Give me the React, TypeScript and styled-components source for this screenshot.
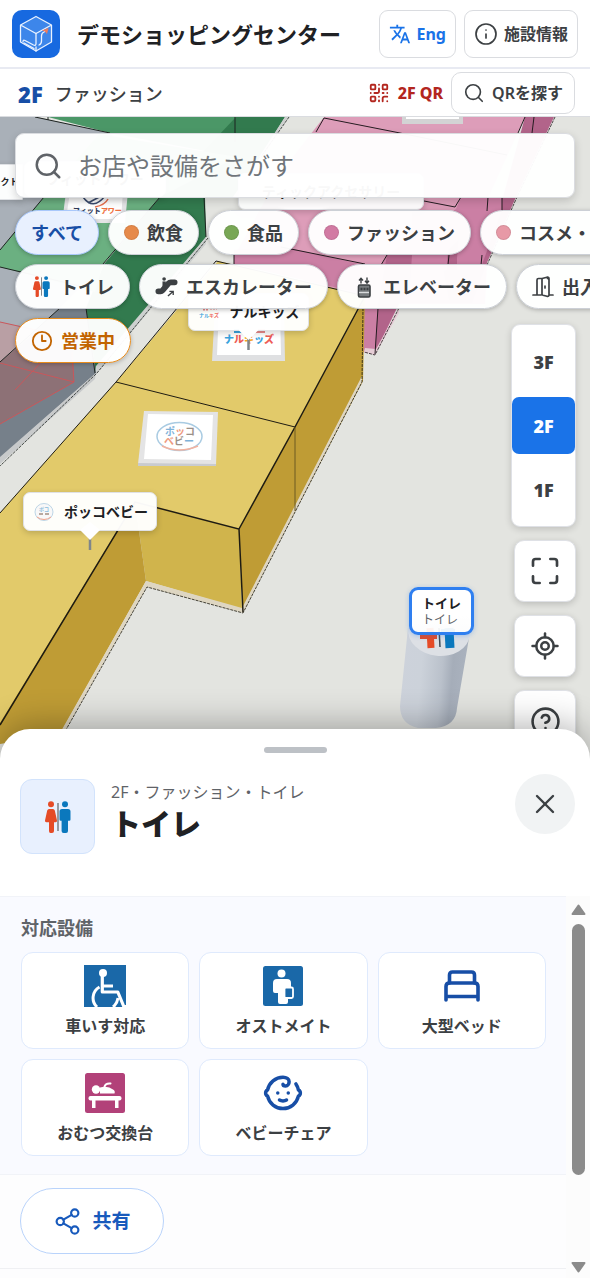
import React from "react";
import styled, { createGlobalStyle, css } from "styled-components";
import {
  Baby,
  CircleQuestionMark,
  Clock3,
  Info,
  LocateFixed,
  Maximize,
  QrCode,
  Search,
  Share2,
  X,
} from "lucide-react";
import { MdTranslate } from "react-icons/md";

const GlobalStyle = createGlobalStyle`
  *, *::before, *::after { box-sizing: border-box; }
  body {
    margin: 0;
    background: #fff;
    color: #3c4043;
    font-family: "Noto Sans", "Noto Sans CJK JP", sans-serif;
    overflow: hidden;
  }
  button, input { font: inherit; color: inherit; }
  button { cursor: pointer; }
  h1, h2, h3, p, ul { margin: 0; padding: 0; }
  svg { display: block; flex: none; }
`;

const Page = styled.div`
  display: flex;
  flex-direction: column;
  min-height: 100vh;
`;

/* ---------- top bars ---------- */

const TopBar = styled.header`
  display: flex;
  align-items: center;
  gap: 8px;
  height: 69px;
  padding: 0 12px;
  border-bottom: 2px solid #e8eaf2;
`;

const MallName = styled.h1`
  flex: 1;
  padding-left: 9px;
  font-size: 22px;
  line-height: 32px;
  font-weight: 700;
  color: #202124;
  white-space: nowrap;
`;

const OutlineButton = styled.button<{ $accent?: boolean; $compact?: boolean }>`
  display: flex;
  align-items: center;
  justify-content: center;
  gap: ${(p) => (p.$compact ? 7 : 6)}px;
  height: ${(p) => (p.$compact ? 42 : 48)}px;
  padding: 0 ${(p) => (p.$compact ? 11 : 9)}px;
  border: 1px solid #dadce0;
  border-radius: ${(p) => (p.$compact ? 10 : 9)}px;
  background: #fff;
  color: ${(p) => (p.$accent ? "#1a73e8" : "#3c4043")};
  font-size: 16px;
  font-weight: ${(p) => (p.$compact ? 600 : 700)};
  line-height: 24px;
  white-space: nowrap;
`;

const FloorBar = styled.div`
  display: flex;
  align-items: center;
  height: 48px;
  padding: 0 15px 0 18px;
  border-bottom: 1px solid #dadce0;
`;

const FloorTitle = styled.h2`
  display: flex;
  flex: 1;
  align-items: center;
  gap: 12px;
  padding-top: 2px;
  font-size: 18px;
  line-height: 28px;
  font-weight: 500;

  strong {
    font-size: 22px;
    font-weight: 900;
    color: #174ea6;
  }
`;

const FloorQr = styled.a`
  display: flex;
  align-items: center;
  gap: 8px;
  margin-right: 8px;
  color: #b3261e;
  font-size: 16px;
  line-height: 24px;
  font-weight: 800;
  text-decoration: none;
`;

/* ---------- map ---------- */

const MapArea = styled.main`
  position: relative;
  flex: 1 1 0;
  min-height: 480px;
  overflow: hidden;
  background: #e3e4e0;
`;

const MapCanvas = styled.svg`
  position: absolute;
  inset: 0;
  width: 100%;
  height: 100%;
`;

const MapLabel = styled.div<{ $x: number; $y: number; $w: number; $h: number; $small?: boolean }>`
  position: absolute;
  left: ${(p) => p.$x}px;
  top: ${(p) => p.$y}px;
  display: flex;
  align-items: center;
  justify-content: center;
  gap: 8px;
  width: ${(p) => p.$w}px;
  height: ${(p) => p.$h}px;
  border: 1px solid #dfe1e5;
  border-radius: ${(p) => (p.$small ? 1 : 7)}px;
  background: rgba(255, 255, 255, 0.97);
  box-shadow: 0 2px 6px rgba(0, 0, 0, 0.18);
  color: #202124;
  font-size: ${(p) => (p.$small ? 9 : 14)}px;
  line-height: 20px;
  font-weight: 700;
  white-space: nowrap;
`;

const LabelPointer = styled.span`
  position: absolute;
  top: 100%;
  left: 50%;
  width: 20px;
  height: 18px;
  margin: -8px 0 0 -10px;
  background: #fff;
  clip-path: polygon(50% 0, 100% 44%, 50% 100%, 0 44%);
`;

const SelectedLabel = styled.div`
  position: absolute;
  left: 409px;
  top: 470px;
  width: 65px;
  height: 48px;
  padding: 0 10px;
  border: 3px solid #2f7ff0;
  border-radius: 9px;
  background: linear-gradient(#fff 60%, rgba(255, 255, 255, 0.92));
  box-shadow: 0 1px 5px rgba(26, 115, 232, 0.3);
  color: #202124;
  font-size: 13px;
  line-height: 17px;
  font-weight: 700;
  white-space: nowrap;
  display: flex;
  flex-direction: column;
  justify-content: center;

  small {
    font-size: 12px;
    line-height: 16px;
    font-weight: 400;
    color: #5f6368;
  }
`;

const Overlay = styled.div`
  position: absolute;
  inset: 0;
  display: flex;
  flex-direction: column;
  padding-top: 16px;
`;

const SearchBox = styled.label`
  display: flex;
  flex: none;
  align-items: center;
  gap: 15px;
  height: 65px;
  margin: 0 15px 12px;
  padding: 0 17px;
  border: 1px solid #dadce0;
  border-radius: 9px;
  background: rgba(255, 255, 255, 0.97);
  box-shadow: 0 3px 9px rgba(0, 0, 0, 0.16);
  color: #5f6368;

  input {
    flex: 1;
    min-width: 0;
    padding: 0;
    border: 0;
    outline: 0;
    background: none;
    font-size: 24px;
    line-height: 36px;
  }
  input::placeholder { color: #70757a; opacity: 1; }
`;

const ChipRow = styled.div`
  display: flex;
  flex: none;
  gap: 9px;
  margin-bottom: 9px;
  padding-left: 15px;
`;

const chipTones = {
  plain: css`
    border-color: #ccd0d6;
    background: rgba(255, 255, 255, 0.97);
    color: #3c4043;
  `,
  active: css`
    border-color: #a9c8fb;
    background: #e8f0fe;
    color: #174ea6;
  `,
  open: css`
    border-color: #e88c1c;
    background: rgba(255, 255, 255, 0.97);
    color: #c26401;
  `,
};

const Chip = styled.button<{ $tone?: keyof typeof chipTones }>`
  display: flex;
  flex: none;
  align-items: center;
  gap: 8px;
  height: 45px;
  padding: 0 15px;
  border: 1px solid;
  border-radius: 23px;
  box-shadow: 0 1px 4px rgba(0, 0, 0, 0.25);
  font-size: 18px;
  line-height: 28px;
  font-weight: 700;
  white-space: nowrap;
  ${(p) => chipTones[p.$tone ?? "plain"]}
`;

const Dot = styled.span<{ $color: string }>`
  width: 15px;
  height: 15px;
  border: 1px solid rgba(0, 0, 0, 0.08);
  border-radius: 50%;
  background: ${(p) => p.$color};
`;

const LowerRow = styled.div`
  display: flex;
  align-items: flex-start;
  justify-content: space-between;
  padding: 0 14px 0 15px;
`;

const MapControls = styled.nav`
  display: flex;
  flex-direction: column;
  align-items: flex-end;
  gap: 13px;
  padding-top: 6px;
`;

const FloorPicker = styled.div`
  display: flex;
  flex-direction: column;
  justify-content: center;
  gap: 7px;
  width: 65px;
  height: 203px;
  border: 1px solid #dfe1e6;
  border-radius: 9px;
  background: #fff;
  box-shadow: 0 2px 7px rgba(0, 0, 0, 0.16);
`;

const FloorButton = styled.button<{ $current?: boolean }>`
  height: 57px;
  padding: 0;
  border: 0;
  border-radius: 7px;
  background: ${(p) => (p.$current ? "#1a73e8" : "transparent")};
  color: ${(p) => (p.$current ? "#fff" : "#3c4043")};
  font-size: 18px;
  line-height: 24px;
  font-weight: 900;
`;

const ControlButton = styled.button`
  display: grid;
  place-items: center;
  width: 62px;
  height: 62px;
  padding: 0;
  border: 1px solid #dfe1e6;
  border-radius: 10px;
  background: #fff;
  box-shadow: 0 2px 7px rgba(0, 0, 0, 0.18);
  color: #3c4043;
`;

/* ---------- bottom sheet ---------- */

const Sheet = styled.section`
  position: relative;
  margin-top: -30px;
  border-radius: 30px 30px 0 0;
  background: #fff;
  box-shadow: 0 -4px 34px rgba(0, 0, 0, 0.3);
`;

const SheetHeader = styled.div`
  display: flex;
  flex-direction: column;
  height: 167px;
  padding-top: 18px;
`;

const Handle = styled.span`
  align-self: center;
  width: 63px;
  height: 6px;
  margin-bottom: 21px;
  border-radius: 3px;
  background: #bdc1c6;
`;

const Place = styled.div`
  display: flex;
  align-items: flex-start;
  padding: 0 15px 0 20px;
`;

const PlaceIcon = styled.div`
  display: grid;
  place-items: center;
  width: 75px;
  height: 75px;
  margin: 5px 16px 0 0;
  border: 1px solid #d2e3fc;
  border-radius: 12px;
  background: #e8f0fe;
`;

const PlaceText = styled.div`
  flex: 1;
  padding-top: 6px;

  p {
    font-size: 16px;
    line-height: 24px;
    color: #5f6368;
  }
  h2 {
    font-size: 30px;
    line-height: 40px;
    font-weight: 900;
    color: #202124;
  }
`;

const CloseButton = styled.button`
  display: grid;
  place-items: center;
  width: 60px;
  height: 60px;
  padding: 0;
  border: 0;
  border-radius: 50%;
  background: #f1f3f4;
  color: #3c4043;
`;

const SheetBody = styled.div`
  display: flex;
`;

const SheetContent = styled.div`
  flex: 1;
  min-width: 0;
`;

const Facilities = styled.section`
  padding: 17px 20px 18px 21px;
  border-top: 1px solid #f1f3f8;
  background: #f9faff;

  h3 {
    margin-bottom: 10px;
    font-size: 18px;
    line-height: 28px;
    font-weight: 700;
    color: #5f6368;
  }
`;

const FacilityGrid = styled.ul`
  display: grid;
  grid-template-columns: repeat(3, 1fr);
  gap: 10px;
  list-style: none;
`;

const FacilityCard = styled.li`
  display: flex;
  flex-direction: column;
  align-items: center;
  height: 97px;
  padding-top: 12px;
  border: 1px solid #dfeafd;
  border-radius: 12px;
  background: #fff;
  font-size: 16px;
  line-height: 24px;
  font-weight: 700;
`;

const FacilityIcon = styled.span`
  display: grid;
  place-items: center;
  width: 42px;
  height: 42px;
  margin-bottom: 7px;
  color: #174ea6;
`;

const Actions = styled.div`
  padding: 13px 20px 14px;
  border-top: 1px solid #f1f3f8;
  border-bottom: 1px solid #eff0f3;
  background: #fdfdfe;
`;

const ShareButton = styled.button`
  display: flex;
  align-items: center;
  justify-content: center;
  gap: 10px;
  width: 144px;
  height: 66px;
  padding: 0;
  border: 1px solid #b9d3fb;
  border-radius: 33px;
  background: #fff;
  color: #185abc;
  font-size: 19px;
  line-height: 28px;
  font-weight: 700;
`;

const Rest = styled.div`
  height: 9px;
  background: #fdfdfe;
`;

const ScrollTrack = styled.div`
  display: flex;
  flex-direction: column;
  align-items: center;
  width: 24px;
  padding: 8px 0 5px 1px;
  background: #fcfcfc;
`;

const ScrollThumb = styled.span`
  width: 13px;
  height: 251px;
  margin: 9px 0 auto;
  border-radius: 7px;
  background: #8b8b8b;
`;

/* ---------- drawings ---------- */

const Logo = () => (
  <svg width="48" height="48" viewBox="0 0 48 48">
    <rect width="48" height="48" rx="10" fill="#1769e0" />
    <path d="M24 6.500 39.500 15v17L24 41 8.500 32V15z" fill="#3d86ea" />
    <path
      d="M24 6.500 39.500 15v17L24 41 8.500 32V15zM8.500 15 24 23.500 39.500 15"
      fill="none" stroke="#e9f2ff" strokeWidth="1.300" strokeLinejoin="round"
    />
    <path
      d="M11 31.500q0-2 2-1l8.500 4.500q2.500 1 2.500-1.500V23.500M27 35q2.500-1 2.500-4v-5q0-3 2.500-4l2.500-1.500M24 37v4M12 33l10 5.500"
      fill="none" stroke="#e9f2ff" strokeWidth="1.300" strokeLinecap="round" strokeLinejoin="round"
    />
    <path d="m30 20.500 6.500-2.500-1.500 6-2-2.500z" fill="#ef7b5a" />
  </svg>
);

const Restroom = ({ size }: { size: number }) => (
  <svg width={size} height={size} viewBox="0 0 32 32">
    <g fill="#e54b27">
      <circle cx="9" cy="3.200" r="3" />
      <path d="M7 8h4q1.300 0 1.800 1.500L15 19.500q.3 1.700-1.400 1.700H12V30q0 2-2 2H8.500q-1.500 0-1.500-2v-8.800H4.400q-1.700 0-1.400-1.700L5.200 9.500Q5.700 8 7 8z" />
    </g>
    <path d="M16 2v28" stroke="#80868b" strokeWidth="1.600" />
    <g fill="#0b78bd">
      <circle cx="23" cy="3.200" r="3" />
      <path d="M20 8h6q2.500 0 2.500 2.500v8q0 1.200-1.200 1.200H26V30q0 2-2 2h-2.400q-2 0-2-2V19.700h-.9q-1.200 0-1.200-1.200v-8Q17.500 8 20 8z" />
    </g>
  </svg>
);

const Escalator = () => (
  <svg width="23" height="22" viewBox="0 0 24 22" fill="#3c4043">
    <circle cx="9.500" cy="2.600" r="1.900" />
    <path d="M7.800 5.200h3.400v5.300H7.800z" />
    <path
      d="M3.500 15.500h2.200q1.300 0 2.200-1l6.200-7.300q1-1.100 2.400-1.100h4"
      fill="none" stroke="#3c4043" strokeWidth="6" strokeLinecap="round" strokeLinejoin="round"
    />
    <path d="m13.500 20.500 5-4.500M15 15.600h4v3.800" fill="none" stroke="#3c4043" strokeWidth="1.400" />
  </svg>
);

const Elevator = () => (
  <svg width="22" height="22" viewBox="0 0 22 22" fill="none" stroke="#3c4043">
    <path d="M8 7.500V2.500M6 4.500l2-2.300 2 2.300M14 1.500V7m-2-2.200 2 2.300 2-2.300" strokeWidth="1.400" />
    <rect x="5.500" y="9" width="11.500" height="12" rx="1.500" strokeWidth="1.600" fill="#777b7e" />
    <path d="M7.500 13h8" strokeWidth="2.500" strokeDasharray="2 1" />
    <path d="M6 16.500h10" stroke="#d8dadc" strokeWidth="1.400" />
  </svg>
);

const Door = () => (
  <svg width="22" height="22" viewBox="0 0 22 22" fill="none" stroke="#3c4043" strokeWidth="1.700" strokeLinejoin="round" strokeLinecap="round">
    <path d="M1 19h4V4q0-1.500 1.500-1.500H10M9 19H5M21 19h-4V4q0-1.500-1.500-1.500M10 3.500q0-1 1-1.300l4-1q2-.4 2 1.500v16q0 2-2 1.600l-4-1q-1-.3-1-1.300z" />
    <path d="M13 10v2" />
  </svg>
);

const Wheelchair = () => (
  <svg width="42" height="42" viewBox="0 0 42 42">
    <rect width="42" height="42" fill="#1a68a8" />
    <g fill="none" stroke="#fff">
      <path d="M18.300 11v16h15.500l6 14.500h3" strokeWidth="3.200" strokeLinejoin="round" />
      <path d="M19 21h10" strokeWidth="3" />
      <path d="M15.500 22A12.500 12.500 0 0 0 13 42M34 33q-1 6-5 9" strokeWidth="3" />
    </g>
    <circle cx="19" cy="8" r="4" fill="#fff" />
  </svg>
);

const Ostomate = () => (
  <svg width="40" height="40" viewBox="0 0 40 40">
    <rect width="40" height="40" rx="2.500" fill="#1a68a8" />
    <circle cx="18.500" cy="7.500" r="4" fill="#fff" />
    <path d="M14 13h10q4 0 4 4v8q0 2-2 2h-1v9q0 2-2 2h-6q-2 0-2-2v-9h-3q-2 0-2-2v-8q0-4 4-4z" fill="#fff" />
    <rect x="21.500" y="21.500" width="8.500" height="10.500" rx="1.500" fill="#1a68a8" stroke="#fff" strokeWidth="1.800" />
  </svg>
);

const ChangingTable = () => (
  <svg width="40" height="40" viewBox="0 0 40 40">
    <rect width="40" height="40" rx="2.500" fill="#b24179" />
    <g fill="#fff">
      <circle cx="11" cy="16.500" r="4.200" />
      <path d="M15 14.500q8-2 13 2 2.500 1.500 1.500 4H15z" />
      <rect x="3.500" y="23" width="33" height="4.500" rx="2" />
      <path d="M7 27h3.500v8H7zM30 27h3.500v8H30z" />
    </g>
    <path d="M19.500 13.500q1-3.500 6-3" fill="none" stroke="#fff" strokeWidth="2" strokeLinecap="round" />
  </svg>
);

const Bed = () => (
  <svg width="38" height="34" viewBox="0 0 38 34" fill="none" stroke="currentColor" strokeWidth="3.600" strokeLinecap="round" strokeLinejoin="round">
    <path d="M6.500 14V6q0-3 3-3h19q3 0 3 3v8" />
    <path d="M3 31V17.500Q3 14 6.500 14h25q3.500 0 3.500 3.500V31M3 27.500h32" />
  </svg>
);

const Triangle = ({ down }: { down?: boolean }) => (
  <svg width="15" height="11" viewBox="0 0 15 11">
    <path
      d={down ? "M1.500 1h12L7.500 9.500z" : "M1.500 10h12L7.500 1.500z"}
      fill="#8b8b8b" stroke="#8b8b8b" strokeWidth="2" strokeLinejoin="round"
    />
  </svg>
);

const ShopBadge = ({ kids }: { kids?: boolean }) => (
  <svg width="24" height="24" viewBox="0 0 24 24" fontSize="5" fontWeight="700">
    {kids ? (
      <>
        <path d="M5 9h5M12 8h7" stroke="#e98a8a" strokeWidth="3" strokeDasharray="2 1" />
        <text x="1" y="17" fill="#39a3dd">ナル<tspan fill="#ee6a5c">キズ</tspan></text>
      </>
    ) : (
      <>
        <ellipse cx="12" cy="12" rx="9" ry="8.500" fill="#f8f8f8" stroke="#bed6e6" />
        <text x="7" y="11" fill="#8cbcdc">ポコ</text>
        <path d="M7 14h4M13 14h4" stroke="#b8a9a0" strokeWidth="2" />
        <path d="M5 17q7 5 14 0" fill="none" stroke="#f2a48e" />
      </>
    )}
  </svg>
);

const FloorScene = () => (
  <MapCanvas viewBox="0 117 590 642" preserveAspectRatio="xMinYMin slice">
    <defs>
      <linearGradient id="pillar" x1="0" x2="1" y1="0" y2="0.120">
        <stop offset="0" stopColor="#cdd2db" />
        <stop offset="0.350" stopColor="#ccd2da" />
        <stop offset="0.650" stopColor="#bac1cb" />
        <stop offset="0.800" stopColor="#a5adb9" />
        <stop offset="1" stopColor="#aab2be" />
      </linearGradient>
    </defs>
    <rect y="117" width="590" height="660" fill="#e3e4e0" />

    {/* grey block on the left */}
    <path d="M0 117h37l73 16 60 60L60 308 0 362z" fill="#a9b0b8" />
    <path d="M0 362 60 308h27l9 65L0 458z" fill="#76808a" />
    <path d="m96 373-1 6L0 464v-7z" fill="#c8cacb" />
    <path d="M0 322l45 10L0 362z" fill="#b99fa4" />
    <path d="M0 362 38 330l35 15 1 37-74 42z" fill="#8d7176" />
    <path d="m0 322 45 10M0 363l74 19-74 42M15 390l30-32M74 382l-2-30" fill="none" stroke="#c9575b" />

    {/* green block */}
    <path d="M48 117h188l1 40-127-24z" fill="#4b9767" />
    <path d="M236 117h49l-25 40-54 80L96 372l-10-64 18-44 56-67z" fill="#327a4e" />
    <path d="m99 134 138 23-77 40-57 67-8 28L0 267v-17l44-53z" fill="#6bb081" />
    <path d="M206 237 96 366v8l110-130zM285 117h3l-26 40h-3z" fill="#cdd0cf" />
    <path d="M205 197h30l-29 41z" fill="#e3e4e0" />
    <g fill="none" stroke="#1d2320" strokeWidth="1">
      <path d="m35 117 75 16M48 117v3M235 117v25M204 197l2 40M160 197l-57 67M44 197 0 250M0 267l80 19M60 308 0 362M86 308l9 65" />
      <path d="m289 117-28 40M208 238 97 373 0 466" strokeDasharray="3 1" strokeOpacity="0.800" />
    </g>

    {/* pink blocks */}
    <path d="M324 117h201l-64 140-74 50-153-50 45-82z" fill="#dd9db9" />
    <path d="m234 250 46-4 107 24-8 45-10 37h-5v-58l-130-30z" fill="#cb7fa4" />
    <path d="m461 197-5 12-69 46-24 45v52l12 2 24-50h86l5-105z" fill="#cb7fa4" />
    <path d="M525 117h29l-38 80-30 68-14 38h-73l-24 50 3-48 9-50h25l-3 45h40l-8-43 62-60z" fill="#b2648a" />
    <path d="M412 210h37l-2 60-35 10zM461 197h41v13l-22 60h-24l5-60z" fill="#cb7fa4" />
    <path d="M449 250h8v30h-9z" fill="#b2648a" />
    <path d="m365 348 11 1 23-41v5l-24 42-11-3z" fill="#e6cdd6" />
    <g fill="none" stroke="#251c21" strokeWidth="1">
      <path d="m324 118 71 14 112 23M324 118l-8 14M234 255v11M281 247l84 17M424 201l31 6 6-10M387 255l-6 10M488 197l-1 14M502 197v14M449 255l-1 10M482 255l-1 10M525 117l-7 16M534 117l-2 16M378 308l-3 46" />
      <path d="m555 117-38 80-30 68M399 308l-24 47-11-3" strokeDasharray="3 1" strokeOpacity="0.800" />
    </g>
    <path d="M402 117h61v7h-61z" fill="#d3d3d4" />
    <path d="M406 117h53v2h-53z" fill="#fff" />

    {/* yellow blocks */}
    <path d="m0 513 116-131 102-121 149 35-72 131-56 102-104-27L0 725z" fill="#e2ca6a" />
    <path d="m365 298-2 83-120 231-4-83 56-102z" fill="#bf9c35" />
    <path d="m135 502 104 27 3 80-96-28z" fill="#d0b44c" />
    <path d="m135 502 11 79-86 153-60 10v-21z" fill="#bf9c35" />
    <path d="m146 581 96 27 120-232v6L243 613l-96-26-83 146h-4z" fill="#ded6c2" />
    <g fill="none" stroke="#1e1b12">
      <path d="m0 513 116-131 100-121 149 35M116 382l179 45" strokeWidth="1" />
      <path d="m0 725 135-223 104 27 4 83M239 529l56-102 69-129" strokeWidth="1.500" />
      <path d="M295 427v84" strokeWidth="1" stroke="#6d5a22" />
      <path d="m363 308-1 74-119 231-96-26-84 148" strokeDasharray="3 1" strokeOpacity="0.800" strokeWidth="1" />
    </g>

    {/* roof signs */}
    <path d="m66 192 62-1-3 32H62z" fill="#e4e4e6" />
    <path d="m70 192 53-1-2 28H66z" fill="#fff" />
    <path d="M83 197q10 14 22-1M88 203l15-8" fill="none" stroke="#3b4b6e" strokeWidth="1.500" />
    <path d="M95 207q10-2 13-8" fill="none" stroke="#e8704e" strokeWidth="1.500" />
    <text x="73" y="213" fontSize="7" fontWeight="900" fill="#2f3b59">フィット<tspan fill="#ef7040">アワー</tspan></text>

    <path d="m215 308 69 1 1 52h-73z" fill="#dfe0e2" />
    <path d="m219 308 61 1 1 46h-64z" fill="#fff" />
    <text x="224" y="343" fontSize="10" fontWeight="900" fill="#39a3dd">ナ<tspan fill="#ee5c55">ル</tspan><tspan fill="#f2a325">キ</tspan><tspan fill="#39a3dd">ッ</tspan><tspan fill="#ee5c55">ズ</tspan></text>
    <path d="M234 331h10" stroke="#39a3dd" strokeWidth="4" />
    <path d="M256 331h9" stroke="#e98a8a" strokeWidth="4" />

    <path d="m144 411 74 1-2 53-78-1z" fill="#e4e4e5" />
    <path d="m148 414 65 1-2 45-67-1z" fill="#fff" />
    <path d="m138 463 78 1v2h-78z" fill="#c9cbcf" />
    <ellipse cx="179.500" cy="436.500" rx="22.500" ry="14" fill="none" stroke="#a9cbe2" strokeWidth="1.500" />
    <path d="M162 446q17 8 36 0" fill="none" stroke="#f3b29f" strokeWidth="1.500" />
    <g fontSize="10" fontWeight="700">
      <text x="165" y="435" fill="#7fb2d8">ポ<tspan fill="#ee9a80">ッ</tspan><tspan fill="#9b9088">コ</tspan></text>
      <text x="164" y="445" fill="#ee9a80">ベ<tspan fill="#9b9088">ビ</tspan><tspan fill="#7fb2d8">ー</tspan></text>
    </g>
    <path d="M90 536v14M248.500 336v14" stroke="#80868b" strokeWidth="2.500" />

    {/* restroom pillar */}
    <path d="M408 628 400 706Q400 724 418 728H436Q456 726 457 708L469 638z" fill="url(#pillar)" />
    <ellipse cx="439" cy="632" rx="31" ry="24" transform="rotate(6 439 632)" fill="#dde0e5" />
    <g strokeLinecap="butt">
      <path d="M420 637h17" stroke="#e54b27" strokeWidth="4" />
      <path d="m430 628 1 20" stroke="#e54b27" strokeWidth="7" />
      <path d="m439 628 1 19" stroke="#3c4a57" strokeWidth="1.500" />
      <path d="M441 632h14" stroke="#0b78bd" strokeWidth="6" />
      <path d="m449 628 1 20" stroke="#0b78bd" strokeWidth="9" />
    </g>
  </MapCanvas>
);

/* ---------- data ---------- */

const categories = [
  { name: "飲食", color: "#e68a4a" },
  { name: "食品", color: "#78a755" },
  { name: "ファッション", color: "#d27aa3" },
  { name: "コスメ・美容", color: "#e799a6" },
];

const services = [
  { name: "トイレ", icon: <Restroom size={21} /> },
  { name: "エスカレーター", icon: <Escalator /> },
  { name: "エレベーター", icon: <Elevator /> },
  { name: "出入口", icon: <Door /> },
];

const facilities = [
  { name: "車いす対応", icon: <Wheelchair /> },
  { name: "オストメイト", icon: <Ostomate /> },
  { name: "大型ベッド", icon: <Bed /> },
  { name: "おむつ交換台", icon: <ChangingTable /> },
  { name: "ベビーチェア", icon: <Baby size={42} strokeWidth={2} /> },
];

export default function App() {
  return (
    <Page lang="ja">
      <GlobalStyle />
      <TopBar>
        <Logo />
        <MallName>デモショッピングセンター</MallName>
        <OutlineButton $accent>
          <MdTranslate size={22} />
          Eng
        </OutlineButton>
        <OutlineButton>
          <Info size={24} strokeWidth={1.7} />
          施設情報
        </OutlineButton>
      </TopBar>
      <FloorBar>
        <FloorTitle>
          <strong>2F</strong>
          ファッション
        </FloorTitle>
        <FloorQr href="#qr">
          <QrCode size={22} strokeWidth={2} />
          2F QR
        </FloorQr>
        <OutlineButton $compact>
          <Search size={22} strokeWidth={1.8} />
          QRを探す
        </OutlineButton>
      </FloorBar>

      <MapArea>
        <FloorScene />
        <MapLabel $x={-22} $y={47} $w={45} $h={36} $small>セレクト</MapLabel>
        <MapLabel $x={24} $y={44} $w={142} $h={36}>フィットアワー</MapLabel>
        <MapLabel $x={238} $y={56} $w={186} $h={37}>ティックアクセサリー</MapLabel>
        <MapLabel $x={188} $y={176} $w={121} $h={38}>
          <ShopBadge kids />
          ナルキッズ
          <LabelPointer />
        </MapLabel>
        <MapLabel $x={23} $y={375} $w={134} $h={39}>
          <ShopBadge />
          ポッコベビー
          <LabelPointer />
        </MapLabel>
        <SelectedLabel>
          トイレ
          <small>トイレ</small>
        </SelectedLabel>

        <Overlay>
          <SearchBox>
            <Search size={30} strokeWidth={2} />
            <input type="search" placeholder="お店や設備をさがす" aria-label="お店や設備をさがす" />
          </SearchBox>
          <ChipRow>
            <Chip $tone="active">すべて</Chip>
            {categories.map((c) => (
              <Chip key={c.name}>
                <Dot $color={c.color} />
                {c.name}
              </Chip>
            ))}
          </ChipRow>
          <ChipRow>
            {services.map((s) => (
              <Chip key={s.name}>
                {s.icon}
                {s.name}
              </Chip>
            ))}
          </ChipRow>
          <LowerRow>
            <Chip $tone="open">
              <Clock3 size={22} strokeWidth={2} />
              営業中
            </Chip>
            <MapControls>
              <FloorPicker>
                <FloorButton>3F</FloorButton>
                <FloorButton $current>2F</FloorButton>
                <FloorButton>1F</FloorButton>
              </FloorPicker>
              <ControlButton aria-label="全体表示">
                <Maximize size={32} strokeWidth={2} />
              </ControlButton>
              <ControlButton aria-label="現在地">
                <LocateFixed size={30} strokeWidth={2} />
              </ControlButton>
              <ControlButton aria-label="ヘルプ">
                <CircleQuestionMark size={31} strokeWidth={2} />
              </ControlButton>
            </MapControls>
          </LowerRow>
        </Overlay>
      </MapArea>

      <Sheet>
        <SheetHeader>
          <Handle />
          <Place>
            <PlaceIcon>
              <Restroom size={32} />
            </PlaceIcon>
            <PlaceText>
              <p>2F・ファッション・トイレ</p>
              <h2>トイレ</h2>
            </PlaceText>
            <CloseButton aria-label="閉じる">
              <X size={32} strokeWidth={1.8} />
            </CloseButton>
          </Place>
        </SheetHeader>
        <SheetBody>
          <SheetContent>
            <Facilities>
              <h3>対応設備</h3>
              <FacilityGrid>
                {facilities.map((f) => (
                  <FacilityCard key={f.name}>
                    <FacilityIcon>{f.icon}</FacilityIcon>
                    {f.name}
                  </FacilityCard>
                ))}
              </FacilityGrid>
            </Facilities>
            <Actions>
              <ShareButton>
                <Share2 size={29} strokeWidth={1.8} />
                共有
              </ShareButton>
            </Actions>
            <Rest />
          </SheetContent>
          <ScrollTrack aria-hidden="true">
            <Triangle />
            <ScrollThumb />
            <Triangle down />
          </ScrollTrack>
        </SheetBody>
      </Sheet>
    </Page>
  );
}
